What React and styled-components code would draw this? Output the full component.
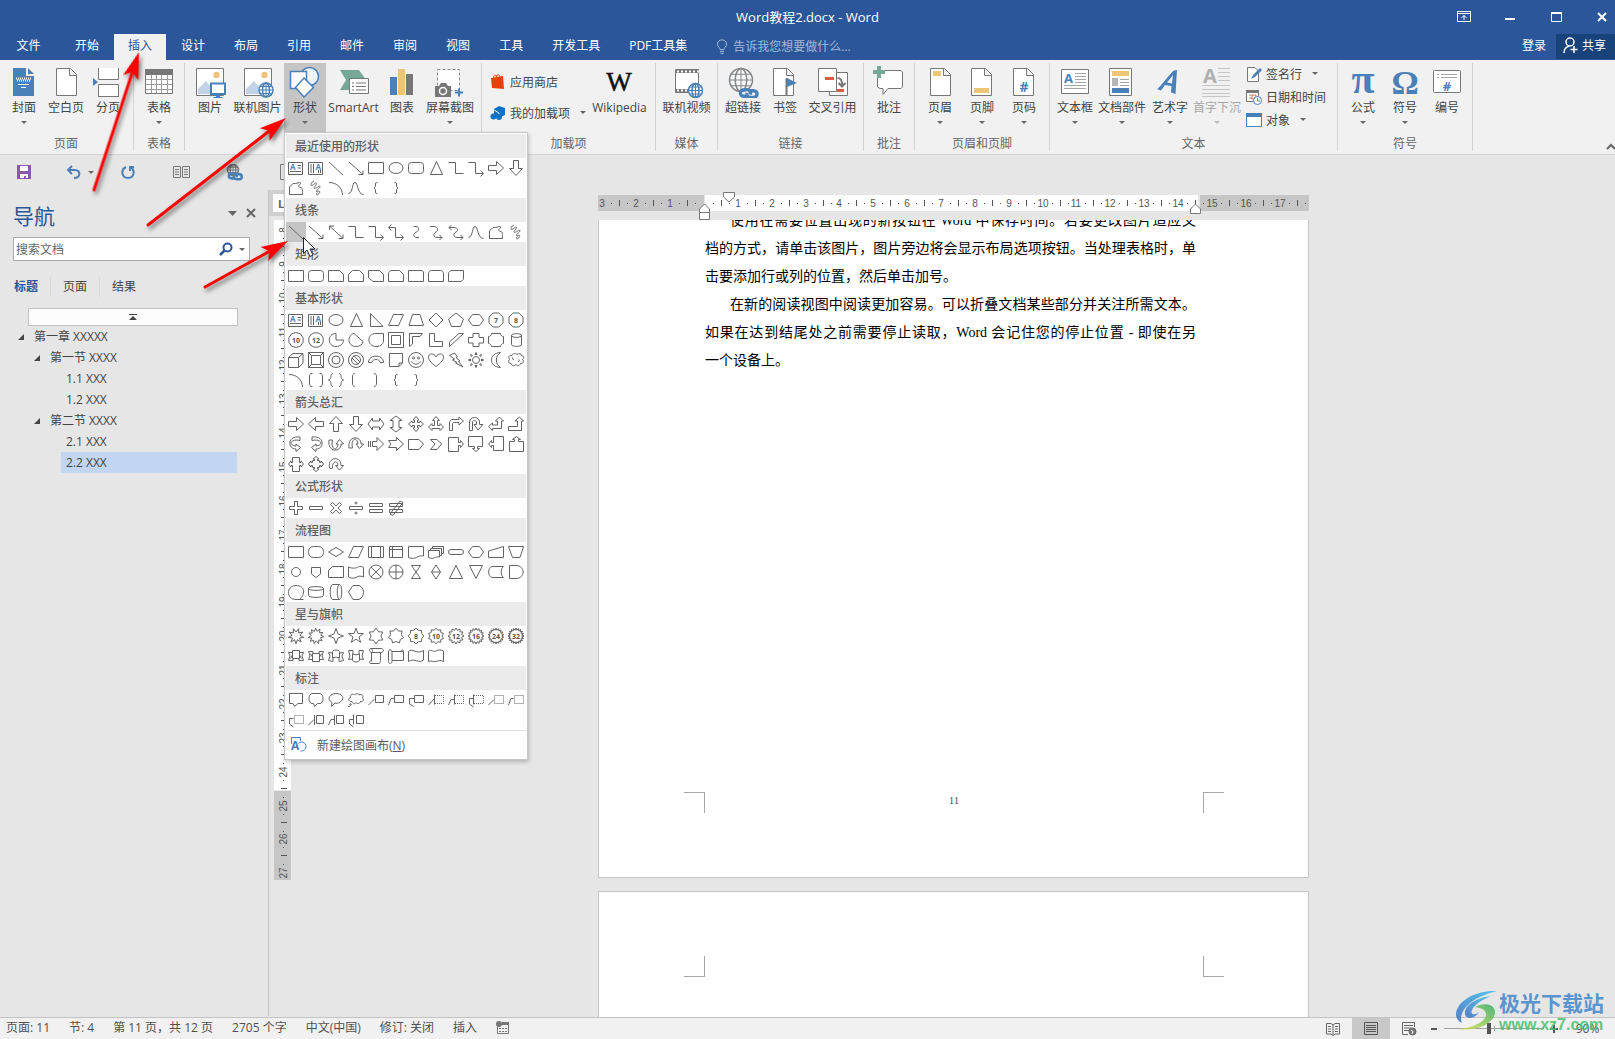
import React from "react";
import styled, { createGlobalStyle, css } from "styled-components";

const BLUE = "#2b579a";
const INK = "#444444";
const ICON_BLUE = "#4a80b8";
const ICON_GRAY = "#777777";
const GOLD = "#eec578";
const PALE = "#c3d3e8";
const TEAL = "#76a797";

const Global = createGlobalStyle`
  *, *::before, *::after { box-sizing: border-box; }
  body { margin: 0; background: #e6e6e6; }
  body, button, input { font-family: "Open Sans", "Noto Sans CJK SC", sans-serif; font-size: 12px; }
  button { border: 0; padding: 0; margin: 0; background: none; color: inherit; cursor: default; }
  svg { display: block; flex: none; }
`;

const App_ = styled.div`
  position: relative;
  height: 100vh;
  display: flex;
  flex-direction: column;
  overflow: hidden;
  color: ${INK};
  background: #e6e6e6;
`;

/* ---------- title bar and tabs ---------- */
const Header = styled.header`
  background: ${BLUE};
  color: #fff;
`;
const TitleBar = styled.div`
  height: 34px;
  display: grid;
  grid-template-columns: 1fr auto 1fr;
  align-items: center;
`;
const Title = styled.h1`
  margin: 0;
  grid-column: 2;
  font-size: 13px;
  font-weight: 400;
  line-height: 34px;
`;
const WindowButtons = styled.div`
  display: flex;
  justify-content: flex-end;
  gap: 16px;
`;
const WindowButton = styled.button`
  width: 30px;
  height: 32px;
  display: flex;
  justify-content: center;
  align-items: center;
  &:last-child { margin-right: -2px; }
`;
const TabRow = styled.nav`
  display: flex;
  height: 26px;
`;
const Tab = styled.button`
  height: 26px;
  line-height: 22px;
  padding: 0 14px 2px;
  margin: 0 1px 0 0;
  color: ${(p) => (p.$active ? BLUE : "#fff")};
  background: ${(p) => (p.$active ? "#f1f1f1" : "transparent")};
`;
const FileTab = styled(Tab)`
  width: 57px;
  margin-right: 4px;
`;
const TellMe = styled.label`
  display: flex;
  align-items: center;
  gap: 5px;
  height: 24px;
  margin-left: 14px;
  input {
    width: 150px;
    border: 0;
    padding: 0;
    outline: 0;
    background: transparent;
    color: #fff;
  }
  input::placeholder { color: #a2b9dc; opacity: 1; }
`;
const Account = styled.div`
  margin-left: auto;
  display: flex;
  gap: 10px;
`;
const SignIn = styled.button`
  line-height: 22px;
  height: 24px;
`;
const Share = styled.button`
  display: flex;
  align-items: center;
  gap: 4px;
  height: 25px;
  padding: 0 9px 3px 7px;
  background: #17427a;
`;

/* ---------- ribbon ---------- */
const RibbonBar = styled.section`
  position: relative;
  z-index: 5;
  display: flex;
  padding: 3px 0;
  background: #f1f1f1;
  border-bottom: 1px solid #d2d2d2;
`;
const Group = styled.div`
  display: flex;
  flex-direction: column;
  padding: 0 4px 0 ${(p) => (p.$first ? 3 : 4)}px;
  border-right: 1px solid #d4d4d4;
`;
const GroupBody = styled.div`
  display: flex;
  height: 72px;
`;
const GroupLabel = styled.div`
  text-align: center;
  height: 16px;
  line-height: 18px;
  color: #666;
`;
const BigWrap = styled.div`
  position: relative;
`;
const BigButton = styled.button`
  width: ${(p) => p.$w}px;
  height: 70px;
  padding-top: 3px;
  display: flex;
  flex-direction: column;
  align-items: center;
  white-space: nowrap;
  color: ${(p) => (p.disabled ? "#a6a6a6" : INK)};
  background: ${(p) => (p.$active ? "#c5c5c5" : "transparent")};
`;
const BigLabel = styled.span`
  margin-top: 1px;
  line-height: 18px;
`;
const CaretMark = styled.i`
  width: 0;
  height: 0;
  flex: none;
  border: 3px solid transparent;
  border-top-color: ${(p) => (p.$dim ? "#bdbdbd" : "#666")};
  border-bottom: 0;
`;
const BigCaret = styled(CaretMark)`
  margin-top: 4px;
`;
const SmallColumn = styled.div`
  width: ${(p) => p.$w}px;
  padding-top: ${(p) => p.$top || 0}px;
  display: flex;
  flex-direction: column;
`;
const SmallButton = styled.button`
  height: ${(p) => p.$h}px;
  padding: 0 0 2px 4px;
  display: flex;
  align-items: center;
  gap: 4px;
  white-space: nowrap;
  ${CaretMark} { margin-left: 6px; }
`;
const Collapse = styled.button`
  margin-left: auto;
  align-self: flex-end;
`;

/* ---------- shapes menu ---------- */
const Menu = styled.div`
  position: absolute;
  left: 0;
  top: 69px;
  width: 244px;
  padding: 1px;
  background: #fff;
  border: 1px solid #c6c6c6;
  box-shadow: 1px 2px 4px rgba(0, 0, 0, 0.22);
`;
const MenuHeading = styled.h2`
  margin: 0;
  padding-left: 9px;
  height: 24px;
  line-height: 26px;
  font-size: 12px;
  font-weight: 500;
  color: #606060;
  background: #ebebeb;
`;
const ShapeGrid = styled.div`
  display: grid;
  grid-template-columns: repeat(12, 20px);
  grid-auto-rows: 20px;
`;
const ShapeButton = styled.button`
  width: 20px;
  height: 20px;
  background: ${(p) => (p.$hot ? "#c5c5c5" : "transparent")};
`;
const MenuFooter = styled.button`
  width: 100%;
  height: 28px;
  display: flex;
  align-items: center;
  gap: 10px;
  padding-left: 4px;
  border-top: 1px solid #e1e1e1;
  color: #5a5a5a;
`;

/* ---------- quick access ---------- */
const QuickBar = styled.div`
  height: 35px;
  flex: none;
  display: flex;
  align-items: center;
  gap: 25px;
  padding: 0 0 1px 10px;
`;
const QuickButton = styled.button`
  width: 28px;
  height: 24px;
  display: flex;
  align-items: center;
  justify-content: center;
`;
const UndoButton = styled(QuickButton)`
  width: 26px;
  gap: 7px;
  padding-left: 3px;
  justify-content: flex-start;
`;

/* ---------- main ---------- */
const Main = styled.main`
  flex: 1;
  min-height: 0;
  display: flex;
`;
const NavPane = styled.aside`
  width: 269px;
  flex: none;
  padding-top: 12px;
  margin-bottom: 1px;
  border-right: 1px solid #c3c3c3;
`;
const NavHead = styled.div`
  display: flex;
  align-items: center;
  height: 28px;
  padding: 0 12px 0 13px;
  h2 {
    margin: 0 auto 0 0;
    font-size: 21px;
    line-height: 28px;
    font-weight: 400;
    color: ${BLUE};
  }
`;
const NavHeadButton = styled.button`
  height: 20px;
  margin-left: 9px;
  margin-bottom: 6px;
`;
const SearchBox = styled.label`
  display: flex;
  align-items: center;
  height: 24px;
  margin: 7px 18px 0 13px;
  padding: 0 4px 0 2px;
  background: #fff;
  border: 1px solid #ababab;
  gap: 6px;
  input {
    flex: 1;
    min-width: 0;
    border: 0;
    padding: 0;
    outline: 0;
    background: transparent;
  }
  input::placeholder { color: #666; opacity: 1; }
`;
const NavTabs = styled.div`
  display: flex;
  margin: 16px 0 0 13px;
`;
const NavTab = styled.button`
  line-height: 20px;
  padding: 0 12px;
  border-right: 1px solid #d9d9d9;
  color: ${(p) => (p.$active ? BLUE : INK)};
  font-weight: ${(p) => (p.$active ? 700 : 400)};
  &:first-child { padding-left: 1px; }
  &:last-child { border-right: 0; }
`;
const JumpTop = styled.button`
  display: flex;
  align-items: center;
  justify-content: center;
  width: 210px;
  height: 18px;
  margin: 11px 0 0 28px;
  background: #fdfdfd;
  border: 1px solid #c3c3c3;
`;
const Tree = styled.div`
  padding: 0 31px 0 13px;
  display: flex;
  flex-direction: column;
`;
const TreeRow = styled.button`
  display: flex;
  align-items: center;
  gap: 10px;
  height: 21px;
  line-height: 20px;
  margin-left: ${(p) => [0, 16, 48][p.$level]}px;
  padding-left: 5px;
  background: ${(p) => (p.$active ? "#c2d5f2" : "transparent")};
`;

const RulerColumn = styled.div`
  width: 23px;
  flex: none;
`;
const TabSelector = styled.button`
  display: block;
  width: 23px;
  height: 26px;
  padding: 4px 0 4px 4px;
  background: #d0d0d0;
  span {
    display: block;
    height: 18px;
    padding-left: 5px;
    line-height: 20px;
    text-align: left;
    background: #fdfdfd;
    font-weight: 700;
    font-size: 11px;
    color: #666;
  }
`;
const VRulerBox = styled.div`
  margin: 4px 0 0 5px;
`;
const DocArea = styled.div`
  flex: 1;
  min-width: 0;
  display: flex;
  flex-direction: column;
  align-items: center;
`;
const HRulerBox = styled.div`
  height: 30px;
  flex: none;
`;
const Pages = styled.div`
  flex: 1;
  min-height: 0;
  overflow: hidden;
  display: flex;
  flex-direction: column;
  gap: 13px;
`;
const Page = styled.article`
  width: 711px;
  height: ${(p) => p.$h}px;
  flex: none;
  display: flex;
  flex-direction: column;
  overflow: hidden;
  background: #fff;
  border: 1px solid #c6c6c6;
  border-top: ${(p) => (p.$cut ? "0" : "1px solid #c6c6c6")};
`;
const BodyText = styled.div`
  margin-top: -13px;
  padding: 0 112px 0 106px;
  font-family: "Liberation Serif", "Noto Sans CJK SC", serif;
  font-size: 14px;
  line-height: 28px;
  color: #000;
`;
const Line = styled.div`
  white-space: nowrap;
  padding-left: ${(p) => (p.$indent ? 25 : 0)}px;
  text-align: justify;
  text-align-last: ${(p) => (p.$end ? "left" : "justify")};
`;
const MarginRow = styled.div`
  display: flex;
  justify-content: space-between;
  height: 21px;
  padding: 0 84px 0 85px;
  margin: ${(p) => (p.$bottom ? "auto 0 64px" : "64px 0 0")};
  font-family: "Liberation Serif", serif;
  font-size: 11px;
  line-height: 17px;
  color: #555;
`;
const corner = css`
  width: 21px;
  height: 21px;
  border: 0 solid #a6a6a6;
`;
const Corner = styled.i`
  ${corner}
  border-width: ${(p) => p.$edges};
`;

/* ---------- status bar ---------- */
const Status = styled.footer`
  height: 22px;
  flex: none;
  display: flex;
  align-items: center;
  padding-left: 6px;
  background: #f1f1f1;
  border-top: 1px solid #c3c3c3;
  color: #505050;
`;
const StatusItem = styled.button`
  line-height: 18px;
  margin: 0 19px 2px 0;
  white-space: nowrap;
`;
const ViewButton = styled.button`
  width: 38px;
  height: 21px;
  display: flex;
  align-items: center;
  justify-content: center;
  background: ${(p) => (p.$active ? "#c8c8c8" : "transparent")};
  margin-left: ${(p) => (p.$push ? "auto" : "0")};
`;
const ZoomButton = styled.button`
  width: 12px;
  height: 18px;
  display: flex;
  align-items: center;
  justify-content: center;
`;
const Slider = styled.input`
  appearance: none;
  width: 100px;
  height: 14px;
  margin: 0 4px;
  background: linear-gradient(#a0a0a0, #a0a0a0) center / 100% 1px no-repeat,
    linear-gradient(#a0a0a0, #a0a0a0) center / 1px 5px no-repeat;
  &::-webkit-slider-thumb {
    appearance: none;
    width: 4px;
    height: 11px;
    background: #555;
  }
`;
const ZoomValue = styled.button`
  width: 55px;
  text-align: center;
  line-height: 18px;
`;

/* ---------- floating layers ---------- */
const Overlay = styled.svg`
  position: absolute;
  left: 0;
  top: 0;
  z-index: 10;
  pointer-events: none;
`;
const Watermark = styled.div`
  position: absolute;
  right: 11px;
  bottom: 6px;
  z-index: 9;
  display: flex;
  align-items: center;
  gap: 2px;
  opacity: 0.85;
  pointer-events: none;
`;
const WatermarkText = styled.div`
  display: flex;
  flex-direction: column;
  strong {
    font-size: 21px;
    line-height: 28px;
    color: #4287cb;
  }
  span {
    font-family: "Liberation Sans", sans-serif;
    font-weight: 700;
    font-size: 16px;
    line-height: 16px;
    color: #49c070;
  }
`;

/* ---------- shape gallery drawings, 20x20 grid ---------- */
const ring = (n, R, r, cx = 10, cy = 10, start = -90) => {
  const pts = [];
  const total = r ? n * 2 : n;
  for (let i = 0; i < total; i++) {
    const a = ((start + (i * 360) / total) * Math.PI) / 180;
    const rad = r && i % 2 ? r : R;
    pts.push(`${(cx + rad * Math.cos(a)).toFixed(1)} ${(cy + rad * Math.sin(a)).toFixed(1)}`);
  }
  return `M${pts.join("L")}Z`;
};
const P = (d, extra) => <path d={d} {...extra} />;
const Turn = (deg, el) => <g transform={`rotate(${deg} 10 10)`}>{el}</g>;
const Flip = (el) => <g transform="matrix(-1 0 0 1 20 0)">{el}</g>;
const Num = (t) => (
  <text x="10" y="12.5" textAnchor="middle" fontSize="7" fontWeight="700" fill="#555" stroke="none">{t}</text>
);
const badge = (d, t) => <>{P(d)}{Num(t)}</>;
const Dotted = (d) => P(d, { strokeDasharray: "1 1" });

const RIGHT = "M2.5 7.5H10.5V3.5L17.5 10L10.5 16.5V12.5H2.5Z";
const BRACE = "M11.5 4.500H10.500Q9.500 4.500 9.500 6V8.500L8 10L9.500 11.500V14Q9.500 15.500 10.500 15.500H11.500";
const CURVED = "M14 3C7 2 3 6 4 10C4 13 7 15 10 15V17.5L14.500 13.5L10 10V12C7 12 5 10 5 8.500C7 6 10 5.500 14 6.500Z";
const RIBBON = "M6.500 6.500H2.500L4 10L2.500 14.500H7V12.500M13.500 6.500H17.500L16 10L17.500 14.500H13V12.500M6.500 4.500H13.500V12.500H6.500Z";
const RIBBON_FOLD = "M6.500 9L4.500 12.500M13.500 9L15.500 12.500";
const UTURN = "M3.500 16.500V8C3.500 2 13.500 2 13.500 8V10.500H17L12 16L8 10.500H10.500V8C10.500 6 6.500 6 6.500 8V16.500Z";

const SHAPES = {
  tb: <>{P("M2.500 4.500H16.500V16.5H2.500ZM11.500 7.500H15M11.500 10H15M4 13.500H15")}<text x="4" y="12" fontSize="8" fontWeight="700" fill={ICON_BLUE} stroke="none">A</text></>,
  vtb: <>{P("M2.500 4.500H16.500V16.500H2.500ZM5 6V15M7.500 6V15M12.500 12V15M14.500 12V15")}<text x="9.500" y="11.500" fontSize="8" fontWeight="700" fill={ICON_BLUE} stroke="none">A</text></>,
  line: P("M3 4L17 17"),
  arrow: P("M3 4L17 16.500M17 12.500V16.500H12.500"),
  dbl: P("M3.500 4L17 16.500M17 12.500V16.500H12.500M3.500 8V4H8"),
  rect: P("M2.500 4.500H17.500V15.500H2.500Z"),
  ell: <ellipse cx="10" cy="10" rx="7" ry="5.500" />,
  round: <rect x="2.500" y="4.500" width="15" height="11" rx="3" />,
  tri: P("M10.500 3.500L16.500 16.500H4.500Z"),
  elbow: P("M2.500 4.500H9.500V15.500H17.500"),
  elbowA: P("M2.500 4.500H9.500V15.500H17.500M14.500 12.500L17.500 15.500L14.500 18.500"),
  elbowD: P("M2.500 5.500H9.500V15.500H17.500M14.500 12.500L17.500 15.500L14.500 18.500M5.500 2.500L2.500 5.500L5.500 8.500"),
  ra: P(RIGHT), la: Turn(180, P(RIGHT)), ua: Turn(-90, P(RIGHT)), da: Turn(90, P(RIGHT)),
  free: P("M3.500 16.500V9L7 5.500H9.500L13.500 4.500L15 5.500C12 7 12 9.500 15 9.500C16.500 10 16.500 11.500 16.500 16.500Z"),
  scrib: P("M8 3C5 4 4 8 6 7.500C8 7 10 3.500 10.500 5.500C10 8 7 9.500 8.500 10.500C11 10 14.500 6.500 14 9C13 11 9.500 12.500 10.500 13.500C13 13 15 13 13 15.500C11 18 9 16.500 11.500 14.500"),
  arc: P("M3 4.500C11 4.500 16.500 10 16.500 17"),
  curve: P("M2.500 15.500C7 15 6 4.500 9 4.500S11.500 16.500 17.500 16.500"),
  lbrace: P(BRACE), rbrace: Flip(P(BRACE)),
  cc: P("M7.500 4.500H10C14 5 13 9 10.500 10C7 11 6.500 15.500 11 15.500H13"),
  ccA: P("M4 4.500H8C13 5 12 9 10 10C7 11 7 15.500 11 15.500H16M13.500 13L16 15.500L13.500 18"),
  ccD: P("M3 5.500H8C13 6 12 9 10 10C7 11 7 15.500 11 15.500H17M14.500 13L17 15.500L14.500 18M5.500 3L3 5.500L5.500 8"),
  snip1: P("M2.500 4.500H13.500L17.500 8.500V15.500H2.500Z"),
  snip2: P("M6.500 4.500H13.500L17.500 8.500V15.500H2.500V8.500Z"),
  snipD: P("M2.500 4.500H13.500L17.500 8.500V15.500H7L2.500 11.500Z"),
  snipR: P("M6 4.500H13.500L17.500 8.500V15.500H2.500V8C2.500 6 4 4.500 6 4.500Z"),
  rnd1: P("M2.500 4.500H15C16.500 4.500 17.500 5.500 17.500 7V15.500H2.500Z"),
  rnd2: P("M5.500 4.500H14.500C16.500 4.500 17.500 6 17.500 8V15.500H2.500V8C2.500 6 3.500 4.500 5.500 4.500Z"),
  rndD: P("M6 4.500H17.500V12C17.500 14 16 15.500 14 15.500H2.500V8C2.500 6 4 4.500 6 4.500Z"),
  rtri: P("M4.500 3.500V16.500H17Z"),
  para: P("M7.500 4.500H17.500L12.500 15.500H2.500Z"),
  trap: P("M6.500 4.500H14L17.500 15.500H3Z"),
  dia: P("M10 3L17 10L10 17L3 10Z"),
  pent: P("M10 3L17.500 9L14.500 16.500H5.500L2.500 9Z"),
  hex: P("M6.500 4.500H13.500L17.500 10L13.500 15.500H6.500L2.500 10Z"),
  hept: badge(ring(8, 7.600, 0, 10, 10, 22.500), "7"), oct: badge(ring(8, 7.600, 0, 10, 10, 22.500), "8"),
  deca: badge(ring(10, 7.500), "10"), dodec: badge(ring(12, 7.500, 0, 10, 10, 15), "12"),
  pie: P("M10 3.500C1 3.500 1 16.500 10 16.500C14 16.500 17.500 14 17.500 10H10Z"),
  chord: P("M8 3.500C1 5 1 16.500 10 16.500C14 16.500 16.500 14.500 17 11.500Z"),
  tear: P("M17.500 3.500H10C0 3.500 1 16.500 10 16.500C16 16.500 17.500 13 17.500 10Z"),
  frame: P("M2.500 2.500H17.500V17.500H2.500ZM5.500 5.500H14.500V14.500H5.500Z"),
  half: P("M3.500 3.500H16.500L14 6.500H6.500V14L3.500 16.500Z"),
  corner: P("M3.500 3.500H8.500V11.500H16.500V16.500H3.500Z"),
  stripe: P("M13 3.500H17.500L3.500 16.500V12Z"),
  cross: P("M7 3.500H13V7.500H17.500V13H13V16.500H7V13H2.500V7.500H7Z"),
  plaque: P("M5.500 3.500H14.500C14.500 5.500 16 6.500 17.500 6.500V13.500C16 13.500 14.500 15 14.500 16.500H5.500C5.500 15 4 13.500 2.500 13.500V6.500C4 6.500 5.500 5.500 5.500 3.500Z"),
  can: P("M5.500 5.500C5.500 3 15.500 3 15.500 5.500V14.500C15.500 17 5.500 17 5.500 14.500ZM5.500 5.500C5.500 8 15.500 8 15.500 5.500"),
  cube: P("M2.500 7.500H12.500V17.500H2.500ZM2.500 7.500L7 3.500H17V13L12.500 17.500M12.500 7.500L17 3.500"),
  bevel: P("M2.500 2.500H17.500V17.500H2.500ZM5.500 5.500H14.500V14.500H5.500ZM2.500 2.500L5.500 5.500M17.500 2.500L14.500 5.500M2.500 17.500L5.500 14.500M17.500 17.500L14.500 14.500"),
  donut: <><circle cx="10" cy="10" r="7.500" /><circle cx="10" cy="10" r="4" /></>,
  no: <><circle cx="10" cy="10" r="7.500" /><circle cx="10" cy="10" r="4.500" />{P("M6 8L12 14M8 6L14 12")}</>,
  barc: P("M2.500 12.500C2.500 4 17.500 4 17.500 12.500H14C14 8.500 6 8.500 6 12.500Z"),
  fold: P("M3.500 3.500H16.500V13L13 16.500H3.500ZM16.500 13H13V16.500"),
  smile: <><circle cx="10" cy="10" r="7.500" /><circle cx="7.500" cy="8" r="1" /><circle cx="12.500" cy="8" r="1" />{P("M5.500 11.500C7 15 13 15 14.500 11.500")}</>,
  heart: P("M10 16.500C4 12 2.500 9.500 2.500 7C2.500 3.500 8 2.500 10 7C12 2.500 17.500 3.500 17.500 7C17.500 9.500 16 12 10 16.500Z"),
  bolt: P("M8.500 3L11.500 7L10 7.500L14 11L12.500 11.500L17 17L9.500 13L11 12.500L6.500 10L8.500 9L3.500 5.500Z"),
  sun: <><circle cx="10" cy="10" r="3.500" />{P("M10 2.500L11 4.500H9ZM10 17.500L9 15.500H11ZM2.500 10L4.500 9V11ZM17.500 10L15.500 11V9ZM4.500 4.500L6.500 5.500L5.500 6.500ZM15.500 4.500L14.500 6.500L13.500 5.500ZM4.500 15.500L5.500 13.500L6.500 14.500ZM15.500 15.500L13.500 14.500L14.500 13.500Z")}</>,
  moon: P("M14.500 2.500C2.500 3 2.500 17 14.500 17.500C9 14 9 6 14.500 2.500Z"),
  cloud: P("M5 13.500C2 13.500 2 10 4 9.500C1.500 8 3 4.500 6 5.500C7 3 10 3 11 4.500C13 3 15.500 3.500 15.500 5.500C18.500 6 18 9 16.500 9.500C18.500 12 16.500 14 14.500 13.500C13.500 16.500 10.500 16 10 14.500C8.500 16.500 5.500 16 5 13.500ZM8 9.500C6.500 9.500 6 8.500 6.500 7.500M12 11.500C13.500 11.500 13.500 10 13 9.500"),
  bks: P("M6.500 3.500C4 3.500 3.500 4.500 3.500 7V13C3.500 15.500 4 16.500 6.500 16.500M13.500 3.500C16 3.500 16.500 4.500 16.500 7V13C16.500 15.500 16 16.500 13.500 16.500"),
  brs: P("M7 3.500C3.500 3.500 6.500 9 2.500 10C6.500 11 3.500 16.500 7 16.500M13 3.500C16.500 3.500 13.500 9 17.500 10C13.500 11 16.500 16.500 13 16.500"),
  lbk: P("M9 3.500C6.500 4 6.500 5 6.500 7V13C6.500 15 6.500 16 9 16.500"),
  rbk: P("M8 3.500C10.500 4 10.500 5 10.500 7V13C10.500 15 10.500 16 8 16.500"),
  lra: P("M2 10L6.500 4V7H13.500V4L18 10L13.500 16V13H6.500V16Z"),
  uda: Turn(90, P("M2 10L6.500 4V7H13.500V4L18 10L13.500 16V13H6.500V16Z")),
  quad: P("M10 2.500L13 6H11.500V8.500H14V7L17.500 10L14 13V11.500H11.500V14H13L10 17.500L7 14H8.500V11.500H6V13L2.500 10L6 7V8.500H8.500V6H7Z"),
  tri3: P("M10 2.500L13.500 6.500H11.500V11.500H14V9.500L17.500 13L14 16.500V14.500H6V16.500L2.500 13L6 9.500V11.500H8.500V6.500H6.500Z"),
  bend: P("M3.500 16.500V9C3.500 6.500 5 5.500 7 5.500H13V3L17.500 7L13 11V8.500H8C7 8.500 6.500 9 6.500 10V16.500Z"),
  uturn: P(UTURN),
  lup: P("M2.500 12.500L6.500 9V11H11.500V7H9.500L13.500 3L17.500 7H15.500V14.500H6.500V16.500Z"),
  bup: P("M2.500 12.500H11.500V7H9L13.500 3L17.500 7H15.500V16.500H2.500Z"),
  cvR: P(CURVED), cvL: Flip(P(CURVED)), cvU: Turn(-90, P(CURVED)), cvD: <g transform="matrix(0 1 1 0 0 0)">{P(CURVED)}</g>,
  strp: P("M2.500 7V13M4.500 7V13M6.500 7.500H11V3.500L17.500 10L11 16.500V12.500H6.500Z"),
  ntch: P("M2.500 6.500H10.500V3.500L17.500 10L10.500 16.500V13.500H2.500L5 10Z"),
  pArr: P("M2.500 5.500H13L17.500 10L13 15.500H2.500Z"),
  chev: P("M4.500 5.500H11L15.500 10L11 15.500H4.500L9 10Z"),
  coR: P("M2.500 3.500H12.500V8.500H14.500V6.500L17.500 10L14.500 13.500V11.500H12.500V17.500H2.500Z"),
  coD: P("M2.500 2.500H16.500V12.500H11.500V14.500H13.500L10 17.500L6.500 14.500H8.500V12.500H2.500Z"),
  coL: Turn(180, P("M2.500 3.500H12.500V8.500H14.500V6.500L17.500 10L14.500 13.500V11.500H12.500V17.500H2.500Z")),
  coU: P("M3.500 17.500H17.500V7.500H12.500V5.500H14.500L10.500 2.500L6.500 5.500H8.500V7.500H3.500Z"),
  coLR: P("M2.500 10L5 7V8.500H6.500V3.500H13.500V8.500H15V7L17.500 10L15 13V11.500H13.500V17.500H6.500V11.500H5V13Z"),
  coQ: P("M10 2.500L13 5H11.500V6.500H13.500V8.500H15V7L17.500 10L15 13V11.500H13.500V13.500H11.500V15H13L10 17.500L7 15H8.500V13.500H6.500V11.500H5V13L2.500 10L5 7V8.500H6.500V6.500H8.500V5H7Z"),
  circ: P("M3.500 14C1 2.500 15.500 1.500 15 11.500H17.500L13.500 16L9.500 11.500H12C12 6 6 6.500 6.500 14Q5 15.500 3.500 14Z"),
  plus: P("M8.500 3.500H11.500V8.500H16.500V11.500H11.500V16.500H8.500V11.500H3.500V8.500H8.500Z"),
  minus: P("M3.500 8.500H16.500V11.500H3.500Z"),
  mult: P("M4.500 6.500L6.500 4.500L10 8L13.500 4.500L15.500 6.500L12 10L15.500 13.500L13.500 15.500L10 12L6.500 15.500L4.500 13.500L8 10Z"),
  div: <>{P("M3.500 8.500H16.500V11.500H3.500Z")}<circle cx="10" cy="5" r="1" /><circle cx="10" cy="15" r="1" /></>,
  eq: P("M3.500 5.500H16.500V8.500H3.500ZM3.500 11.500H16.500V14.500H3.500Z"),
  neq: P("M3.500 5.500H16.500V8.500H3.500ZM3.500 11.500H16.500V14.500H3.500ZM14 3L17 4.500L7 17.500L4 16Z"),
  fRound: <rect x="2.500" y="4.500" width="15" height="11" rx="5" />,
  fDia: P("M10 5.500L17.500 10L10 14.500L2.500 10Z"),
  pre: P("M2.500 4.500H17.500V15.500H2.500ZM5.500 4.500V15.500M14.500 4.500V15.500"),
  inn: P("M3.500 4.500H16.500V15.500H3.500ZM6.500 4.500V15.500M3.500 7.500H16.500"),
  doc: P("M2.500 4.500H17.500V14C12 12.500 10 18.500 2.500 15.500Z"),
  mdoc: P("M2.500 8.500H13.500V15C9 14 8 18 2.500 15.500ZM4.500 8.500V6.500H15.500V13.500H13.500M6.500 6.500V4.500H17.500V11.500H15.500"),
  term: <rect x="2.500" y="7.500" width="15" height="5" rx="2.500" />,
  man: P("M2.500 9L17.500 4.500V15.500H2.500Z"),
  mop: P("M2.500 4.500H17.500L14 15.500H6.500Z"),
  conn: <circle cx="10" cy="10" r="4.500" />,
  off: P("M5.500 5.500H14.500V12L10 15.500L5.500 12Z"),
  card: P("M6.500 4.500H17.500V15.500H2.500V8.500Z"),
  tape: P("M2.500 5C7 7 11 6 12 5C14 4 16 4.500 17.500 5.500V15C14 13.500 12 14 10 15.500C7 17 4 16 2.500 15Z"),
  sumj: <><circle cx="10" cy="10" r="7" />{P("M5 5L15 15M15 5L5 15")}</>,
  orj: <><circle cx="10" cy="10" r="7" />{P("M10 3V17M3 10H17")}</>,
  coll: P("M5.500 3.500H14.500L5.500 16.500H14.500Z"),
  sort: P("M10 3L14.500 10L10 17L5.500 10ZM5.500 10H14.500"),
  ext: P("M10 3.500L16.500 16.500H3.500Z"), mrg: P("M3.500 3.500H16.500L10 16.500Z"),
  stor: P("M6 4.500H17.500C14.500 6 14.500 14 17.500 15.500H6C1.500 14 1.500 6 6 4.500Z"),
  delay: P("M3.500 3.500H10C19.500 3.500 19.500 16.500 10 16.500H3.500Z"),
  seq: P("M10 17.500C0 17.500 0 3.500 10 3.500S19 13 13.500 17.500ZM10 17.500H17.500"),
  disk: P("M2.500 6.500C2.500 4 17.500 4 17.500 6.500V13.500C17.500 16 2.500 16 2.500 13.500ZM2.500 6.500C2.500 9 17.500 9 17.500 6.500"),
  dir: P("M6.500 2.500C3.500 2.500 3.500 17.500 6.500 17.500H13.500C16.500 17.500 16.500 2.500 13.500 2.500ZM13.500 2.500C10.500 2.500 10.500 17.500 13.500 17.500"),
  disp: P("M7 3.500H13C19 5.500 19 15 13 17.500H7L2.500 10Z"),
  ex1: P(ring(9, 7.800, 4, 10, 10, -70)), ex2: P(ring(11, 7.800, 4.800, 10, 10, -60)),
  s4: P(ring(4, 7.500, 2.800)), s5: P(ring(5, 7.800, 3.200)), s6: P(ring(6, 7.800, 5)), s7: P(ring(7, 7.800, 5.500)),
  s8: badge(ring(8, 7.800, 6.200), "8"), s10: badge(ring(10, 7.800, 6), "10"), s12: badge(ring(12, 8, 5.800), "12"),
  s16: badge(ring(16, 8, 5.800), "16"), s24: badge(ring(18, 8, 5.800), "24"), s32: badge(ring(20, 8, 5.800), "32"),
  rbU: <>{P(RIBBON)}{P(RIBBON_FOLD)}</>,
  rbD: <g transform="matrix(1 0 0 -1 0 20)">{P(RIBBON)}{P(RIBBON_FOLD)}</g>,
  crU: P("M6.500 5.500C8 3.500 12 3.500 13.500 5.500V12C12 11 8 11 6.500 12ZM6.500 7L2.500 6.500L4 10L2.500 14.500L7 15.500V12M13.500 7L17.500 6.500L16 10L17.500 14.500L13 15.500V12"),
  crD: P("M6.500 14.500C8 16.500 12 16.500 13.500 14.500V8C12 9 8 9 6.500 8ZM6.500 13L2.500 13.500L4 10L2.500 4.500L7 4.500V8M13.500 13L17.500 13.500L16 10L17.500 4.500L13 4.500V8"),
  vsc: P("M5.500 6.500V15C3 14.500 2.500 17.500 5 17.500H13C14.500 17.500 14.500 16 14.500 6.500M4.500 2.500H15.500C18 3 18 6 15.500 6.500H5.500C7 6 7 3 4.500 2.500C3 3 3 6 5.500 6.500"),
  hsc: P("M6 5.500H17.500V14.500H6M2.500 6C2.500 3 6 3 6 6V15.500C6 18 2.500 18 2.500 15.500ZM17.500 5.500C17.500 3.500 15 3.500 15 5.500"),
  wave: P("M2.500 5.500C6 1.500 11 9 17.500 4.500V14C13 18 8 11.500 2.500 15.500Z"),
  dwave: P("M2.500 5C5 3 8 6.500 10 5S15 3.500 17.500 5V15.500C15 14 12 14.500 10 15.500S5 14 2.500 15.500Z"),
  cRect: P("M3.500 3.500H16.500V13.500H12L8.500 16.500L7 13.500H3.500Z"),
  cRnd: P("M6 3.500H14C18 4 18 13 14 13.500H11.500L8.500 16.500L7.500 13.500H6C2 13 2 4 6 3.500Z"),
  cOv: P("M6 12.500C0 9 4 3.500 10 3.500S19 8 15 11.500C13 13.500 10 13.500 9 13L5.500 16.500Z"),
  cCl: <>{P("M6 11.500C2 12 2 8 4.500 7.500C4 4 7.500 3.500 8.500 5C10 3 13 3.500 13 5C16 3.500 18 6 16.500 8C18.500 10 16.500 12.500 14.500 11.500C13.500 14.500 10.500 13.500 10 12.500C9 14.500 6.500 14 6 11.500Z")}<circle cx="4.500" cy="14.500" r="0.800" /><circle cx="3" cy="16.500" r="0.500" /></>,
  l1: P("M9.500 5.500H17.500V12.500H9.500ZM2.500 15L8.500 9"),
  l2: P("M8.500 5.500H17.500V12.500H8.500ZM2.500 15L5 8.500H8.500"),
  l3: P("M8.500 5.500H17.500V12.500H8.500ZM8.500 8.500H3.500V14L7.500 16.500"),
  a1: <>{P("M2.500 15L8 9M8.500 4.500V14.500")}{Dotted("M9 5.500H17.500V13.500H9")}</>,
  a2: <>{P("M2.500 15L5 9.500H8M8.500 4.500V14.500")}{Dotted("M9 5.500H17.500V13.500H9")}</>,
  a3: <>{P("M7.500 8.500H3.500V14L7.500 17M7.500 4.500V14.500")}{Dotted("M8 5.500H17.500V13.500H8")}</>,
  n1: <>{P("M2.500 15L8 9.500")}{Dotted("M8.500 5.500H17.500V13.500H8.500Z")}</>,
  n2: <>{P("M2.500 15L5 8.500H7.500")}{Dotted("M8.500 5.500H17.500V13.500H8.500Z")}</>,
  n3: <>{P("M7.500 8.500H3.500V14L7.500 17")}{Dotted("M8.500 5.500H17.500V13.500H8.500Z")}</>,
  b1: P("M10.500 5.500H17.500V13.500H10.500ZM8.500 5V15M2.500 15L8 9.500"),
  b2: P("M10.500 5.500H17.500V13.500H10.500ZM8.500 5V15M2.500 15L5 9.500H8"),
  b3: P("M10.500 5.500H17.500V13.500H10.500ZM7.500 4.500V14.500M7.500 9.500H3.500V14L7.500 17"),
};

const MENU = [
  ["最近使用的形状", "tb vtb line arrow rect ell round tri elbow elbowA ra da free scrib arc curve lbrace rbrace"],
  ["线条", "line arrow dbl elbow elbowA elbowD cc ccA ccD curve free scrib"],
  ["矩形", "rect round snip1 snip2 snipD snipR rnd1 rnd2 rndD"],
  ["基本形状", "tb vtb ell tri rtri para trap dia pent hex hept oct deca dodec pie chord tear frame half corner stripe cross plaque can cube bevel donut no barc fold smile heart bolt sun moon cloud arc bks brs lbk rbk lbrace rbrace"],
  ["箭头总汇", "ra la ua da lra uda quad tri3 bend uturn lup bup cvR cvL cvU cvD strp ntch pArr chev coR coD coL coU coLR coQ circ"],
  ["公式形状", "plus minus mult div eq neq"],
  ["流程图", "rect fRound fDia para pre inn doc mdoc term hex man mop conn off card tape sumj orj coll sort ext mrg stor delay seq disk dir disp"],
  ["星与旗帜", "ex1 ex2 s4 s5 s6 s7 s8 s10 s12 s16 s24 s32 rbU rbD crU crD vsc hsc wave dwave"],
  ["标注", "cRect cRnd cOv cCl l1 l2 l3 a1 a2 a3 n1 n2 n3 b1 b2 b3"],
];

const ShapeIcon = ({ id }) => (
  <svg width="20" height="20" viewBox="0 0 20 20" fill="none" stroke="#636363" strokeWidth="1">{SHAPES[id]}</svg>
);

/* ---------- ribbon drawings, 32x32 grid ---------- */
const page = "M6.500 2.500H20.500L26.500 8.500V29.500H6.500ZM19.500 2.500V9.500H26.500";
const outline = { fill: "#fff", stroke: ICON_GRAY };
const globe = (cx, cy, r, c) => (
  <g fill="#f6f9fc" stroke={c} strokeWidth="1.500">
    <circle cx={cx} cy={cy} r={r} />
    <ellipse cx={cx} cy={cy} rx={r / 2} ry={r} fill="none" />
    <path fill="none" d={`M${cx - r} ${cy}H${cx + r}M${cx} ${cy - r}V${cy + r}M${cx - r * 0.85} ${cy - r / 2}H${cx + r * 0.85}M${cx - r * 0.85} ${cy + r / 2}H${cx + r * 0.85}`} strokeWidth="1" />
  </g>
);
const chain = (x, y, s = 1) => (
  <g transform={`translate(${x} ${y}) scale(${s})`} fill="none" stroke={ICON_BLUE} strokeWidth="3">
    <path d="M9 7.500H5.500C1 7.500 1 1.500 5.500 1.500H8C11 1.500 12 4 11 6" />
    <path d="M9.500 2.500H14C18.500 2.500 18.500 8.500 14 8.500H11.500C8.500 8.500 7.500 6.500 8.500 4.500" />
  </g>
);
const photo = (
  <>
    <path d="M2.500 2.500H29.500V29.500H2.500Z" {...outline} />
    <circle cx="22.500" cy="9" r="3.200" fill={GOLD} />
    <path d="M4 28V23L12 15L20 24V28Z" fill={PALE} />
  </>
);
const BIG = {
  cover: <><path d="M5 2H18V10H26V30H5Z" fill={ICON_BLUE} /><path d="M20 2L26 8H20Z" fill={ICON_BLUE} /><path d="M8 12.500H23M9 14.500H23" stroke="#fff" strokeDasharray="1 1" strokeWidth="2" /><path d="M10 18.500H21M13 21.500H18" stroke="#fff" /></>,
  blank: <path d={page} {...outline} />,
  brk: <><path d="M6.500 2V13.500H26.500V2M6.500 30.500V18.500H26.500V30.500" {...outline} /><path d="M6 30.500H27" stroke={ICON_GRAY} /><path d="M1 12L6 16L1 20Z" fill={ICON_BLUE} /></>,
  table: <><path d="M2.500 3.500H29.500V27.500H2.500Z" {...outline} /><path d="M2 3H30V9H2Z" fill={ICON_GRAY} /><path d="M3 13.500H29M3 18.500H29M3 23.500H29M8.500 9V27M13.500 9V27M18.500 9V27M24.500 9V27" stroke="#9b9b9b" /></>,
  pic: <>{photo}<path d="M17 17.500H31V28H17Z" fill="#fff" stroke={ICON_BLUE} strokeWidth="2" /><path d="M22 29H26V31H28.500V32H19.500V31H22Z" fill={ICON_BLUE} /></>,
  opic: <>{photo}{globe(24, 24, 7, ICON_BLUE)}</>,
  shapes: <><circle cx="20.500" cy="10.500" r="9" fill="#eef4fa" stroke={ICON_BLUE} strokeWidth="1.500" /><path d="M1.500 5.500H17.500V22.500H1.500Z" fill="#fff" stroke={ICON_BLUE} strokeWidth="1.500" /><path d="M15 12L24.500 21.500L15 31L6.500 21.500Z" fill="#fff" stroke={ICON_BLUE} strokeWidth="1.500" /></>,
  smart: <><path d="M2 4H21L28 14V24H2L8 14Z" fill={TEAL} /><path d="M11.500 12.500H30.500V27.500H11.500Z" {...outline} /><path d="M14 17H16M14 20.500H16M14 24H16M18 17H28M18 20.500H28M18 24H28" stroke={ICON_GRAY} /></>,
  chart: <><path d="M4 11H11V29H4Z" fill={ICON_BLUE} /><path d="M12 3H19V29H12Z" fill={GOLD} /><path d="M20 8H27V29H20Z" fill={ICON_GRAY} /></>,
  shot: <><path d="M3.500 3.500H25.500V24.500H3.500Z" fill="#fff" stroke="#888" strokeDasharray="3 2" /><path d="M1 20H5L7 17H12L14 20H17V31H1Z" fill={ICON_GRAY} /><circle cx="9" cy="25" r="3.500" fill="none" stroke="#fff" strokeWidth="1.500" /><path d="M21 26.500H29M25 22.500V30.500" stroke={ICON_BLUE} strokeWidth="2" /></>,
  wiki: <text x="15" y="25" textAnchor="middle" fontFamily="Liberation Serif, serif" fontSize="27" fill="#111" stroke="#111" strokeWidth="0.500">W</text>,
  video: <><path d="M4.500 3.500H27.500V26.500H4.500Z" {...outline} /><path d="M4 5.500H28M4 24.500H18" stroke={ICON_GRAY} strokeWidth="3" /><path d="M6 5.500H28M6 24.500H18" stroke="#fff" strokeWidth="2" strokeDasharray="2 2" />{globe(24.500, 24.500, 7, ICON_BLUE)}</>,
  link: <>{globe(14, 14, 11.500, "#858585")}{chain(11, 22, 1.100)}</>,
  mark: <><path d={page} {...outline} transform="translate(-2 0)" /><path d="M17.500 12V29" stroke={ICON_GRAY} strokeWidth="2" /><path d="M18 12L28 17L18 21Z" fill={ICON_BLUE} /></>,
  xref: <><path d="M12.500 6.500H30.500V29.500H12.500Z" {...outline} /><path d="M1.500 2.500H19.500V25.500H1.500Z" {...outline} /><path d="M8 11H17V14H8ZM20 23H27V26H20Z" fill="#d4603f" /><path d="M20.500 12C24 12 25 14 25 19M21.500 17L25 20.500L28.500 17" fill="none" stroke={ICON_GRAY} strokeWidth="2" /></>,
  note: <><path d="M5.500 4.500H28L29.500 6V21L28 22.500H15L10 28.500V22.500H7L4.500 21V10Z" {...outline} /><path d="M0 4H4V0H8V4H12V8H8V12H4V8H0Z" fill={TEAL} /></>,
  head: <><path d={page} {...outline} /><path d="M9 5H17V10H9Z" fill={GOLD} /></>,
  foot: <><path d={page} {...outline} transform="translate(-1 0)" /><path d="M8 22H23V27H8Z" fill={GOLD} /></>,
  num: <><path d={page} {...outline} transform="translate(-1 0)" /><text x="16" y="26" textAnchor="middle" fontSize="14" fontWeight="700" fill={ICON_BLUE}>#</text></>,
  tbox: <><path d="M2.500 3.500H29.500V27.500H2.500Z" {...outline} /><text x="5" y="17" fontSize="13" fontWeight="700" fill={ICON_BLUE}>A</text><path d="M16 7.500H27M16 10.500H27M16 13.500H27M16 16.500H27M5 19.500H27M5 22.500H27" stroke="#a5a5a5" /></>,
  parts: <><path d="M3.500 2.500H25.500V29.500H3.500Z" {...outline} /><path d="M6 5H23V10H6Z" fill={GOLD} /><path d="M6 12H12V20H6Z" fill="#b5b5b5" /><path d="M14 13.500H23M14 16.500H23M14 19.500H23" stroke="#a5a5a5" /><path d="M6 22H23V27H6Z" fill={ICON_BLUE} /></>,
  wart: <path d="M3 23C6 22 17 6 20 4.500L23 4L21.500 28L17 26.500L17.500 20L11 19L7 24.500ZM13 16.500L18 17.500L19 9Z" fill={ICON_BLUE} fillRule="evenodd" />,
  drop: <><text x="2" y="17" fontSize="20" fontWeight="700" fill="#b0b0b0">A</text><path d="M17 2.500H29M17 6.500H29M17 10.500H29M17 14.500H29M1 19.500H29M1 23.500H29M1 27.500H29M1 30.500H29" stroke="#c6c6c6" /></>,
  pi: <text x="16" y="27" textAnchor="middle" fontFamily="Liberation Serif, serif" fontWeight="700" fontSize="42" fill={ICON_BLUE}>π</text>,
  omega: <text x="16" y="28" textAnchor="middle" fontFamily="Liberation Serif, serif" fontWeight="700" fontSize="34" fill={ICON_BLUE}>Ω</text>,
  numb: <><rect x="2.500" y="4.500" width="27" height="22" rx="1" {...outline} /><path d="M6 8.500H8M10 8.500H26M6 11.500H8M10 11.500H26" stroke="#a5a5a5" /><text x="16" y="25" textAnchor="middle" fontSize="13" fontWeight="700" fill={ICON_BLUE}>#</text></>,
};
const SMALL = {
  store: <><path d="M1 4L13 2L14 15L2 14Z" fill="#e8400c" /><path d="M3.500 4C3.500 1 6.500 0 7 3M6 4C6 0 10 0 10 3" fill="none" stroke="#e8400c" /></>,
  addin: <><path d="M9 1L15 3V10L9 13L4 9V4Z" fill="#1172c4" /><path d="M9 13V8L4 5" stroke="#f1f1f1" strokeWidth="1" fill="none" /><circle cx="3.500" cy="11.500" r="3" fill="#1172c4" /><circle cx="9" cy="12" r="3" fill="#1172c4" /></>,
  sign: <><path d="M1.500 1.500H9L12.500 5V15.500H1.500Z" {...outline} /><path d="M5 13L7 9L14 2L16 4L9 11Z" fill={ICON_BLUE} /></>,
  date: <><path d="M0.500 1.500H12.500V12.500H0.500Z" {...outline} /><path d="M0 1H13V4H0Z" fill={ICON_GRAY} /><path d="M3 6H6M3 9H6" stroke="#999" /><path d="M6 6H10V10H6Z" fill="none" stroke="#d9713c" /><circle cx="11.500" cy="11.500" r="4" fill="#fff" stroke={ICON_BLUE} /><path d="M11.500 9V12H14" fill="none" stroke={ICON_BLUE} /></>,
  obj: <><path d="M0.500 1.500H15.500V14.500H0.500Z" fill="#fff" stroke={ICON_BLUE} /><path d="M0 1H16V5H0Z" fill={ICON_BLUE} /></>,
};

const RIBBON_GROUPS = [
  ["页面", [["cover", "封面", 42, 1], ["blank", "空白页", 42], ["brk", "分页", 42]]],
  ["表格", [["table", "表格", 42, 1]]],
  ["", [["pic", "图片", 42], ["opic", "联机图片", 53], ["shapes", "形状", 42, 1], ["smart", "SmartArt", 55], ["chart", "图表", 42], ["shot", "屏幕截图", 54, 1]]],
  ["加载项", [{ w: 102, top: 4, h: 31, items: [["store", "应用商店"], ["addin", "我的加载项", 1]] }, ["wiki", "Wikipedia", 63]]],
  ["媒体", [["video", "联机视频", 53]]],
  ["链接", [["link", "超链接", 42], ["mark", "书签", 42], ["xref", "交叉引用", 53]]],
  ["批注", [["note", "批注", 42]]],
  ["页眉和页脚", [["head", "页眉", 42, 1], ["foot", "页脚", 42, 1], ["num", "页码", 42, 1]]],
  ["文本", [["tbox", "文本框", 42, 1], ["parts", "文档部件", 52, 1], ["wart", "艺术字", 44, 1], ["drop", "首字下沉", 50, 1, 1], { w: 91, top: 0, h: 23, items: [["sign", "签名行", 1], ["date", "日期和时间"], ["obj", "对象", 1]] }]],
  ["符号", [["pi", "公式", 42, 1], ["omega", "符号", 42, 1], ["numb", "编号", 42]]],
];

function ShapesMenu() {
  return (
    <Menu role="menu">
      {MENU.map(([title, ids]) => (
        <section key={title}>
          <MenuHeading>{title}</MenuHeading>
          <ShapeGrid>
            {ids.split(" ").map((id, i) => (
              <ShapeButton key={id + i} aria-label={id} $hot={title === "线条" && i === 0}>
                <ShapeIcon id={id} />
              </ShapeButton>
            ))}
          </ShapeGrid>
        </section>
      ))}
      <MenuFooter>
        <svg width="17" height="17" fill="none" stroke={ICON_BLUE}>
          <path d="M1.500 8V1.500H10.500V5" />
          <circle cx="11.500" cy="10.500" r="4.500" />
          <text x="1" y="14" fontSize="12" fontWeight="700" fill={ICON_BLUE} stroke="#fff" strokeWidth="2" paintOrder="stroke">A</text>
        </svg>
        <span>新建绘图画布(<u>N</u>)</span>
      </MenuFooter>
    </Menu>
  );
}

function Big({ item }) {
  const [icon, label, w, caret, off] = item;
  const open = icon === "shapes";
  return (
    <BigWrap>
      <BigButton $w={w} $active={open} disabled={!!off}>
        <svg width="32" height="32" viewBox="0 0 32 32" fill="none">{BIG[icon]}</svg>
        <BigLabel>{label}</BigLabel>
        {caret ? <BigCaret $dim={off} /> : null}
      </BigButton>
      {open && <ShapesMenu />}
    </BigWrap>
  );
}

function Ribbon() {
  return (
    <RibbonBar>
      {RIBBON_GROUPS.map(([label, items], g) => (
        <Group key={label + g} $first={g === 0}>
          <GroupBody>
            {items.map((it, i) =>
              Array.isArray(it) ? (
                <Big key={i} item={it} />
              ) : (
                <SmallColumn key={i} $w={it.w} $top={it.top}>
                  {it.items.map(([icon, text, caret]) => (
                    <SmallButton key={icon} $h={it.h}>
                      <svg width="16" height="16" fill="none">{SMALL[icon]}</svg>
                      <span>{text}</span>
                      {caret ? <CaretMark /> : null}
                    </SmallButton>
                  ))}
                </SmallColumn>
              )
            )}
          </GroupBody>
          <GroupLabel>{label}</GroupLabel>
        </Group>
      ))}
      <Collapse aria-label="折叠功能区">
        <svg width="9" height="8" fill="none" stroke="#666" strokeWidth="2"><path d="M1 6L5 2L9 6" /></svg>
      </Collapse>
    </RibbonBar>
  );
}

/* one scale division per centimetre */
const cm = (n) => Math.round((n * 711) / 21);

function HRuler() {
  const zero = 106;
  const marks = [];
  for (let n = -3; n <= 17; n++) {
    const x = zero + cm(n);
    if (n !== 0) marks.push(<text key={n} x={x} y="17" textAnchor="middle" fontSize="10" fontFamily="Liberation Sans, sans-serif" fill="#555">{Math.abs(n)}</text>);
    marks.push(<path key={"t" + n} d={`M${x + 9} 13.500h1M${x + 17.5} 10v6M${x + 25} 13.500h1`} stroke="#555" />);
  }
  return (
    <HRulerBox>
      <svg width="711" height="30" fill="none">
        <path d="M0 5H106V21H0ZM602 5H711V21H602Z" fill="#c6c6c6" />
        <path d="M107 5H600V21H107Z" fill="#fff" />
        {marks}
        <path d="M125.500 2.500H136.500V7L131 12L125.500 7ZM101.500 22.500V19L106.500 14L111.500 19V22.500ZM101.500 22.500H111.500V29.500H101.500ZM592.500 23.500V19L597.500 14L602.500 19V23.500Z" fill="#fff" stroke="#777" />
      </svg>
    </HRulerBox>
  );
}

function VRuler() {
  const marks = [];
  for (let n = 8; n <= 27; n++) {
    const y = 10 + cm(n - 8);
    marks.push(
      <g key={n} transform={`translate(9 ${y}) rotate(-90)`}>
        <text x="0" y="4" textAnchor="middle" fontSize="10" fontFamily="Liberation Sans, sans-serif" fill="#555">{n}</text>
      </g>
    );
    if (n < 27) marks.push(<path key={"t" + n} d={`M9.500 ${y + 8}v1M7 ${y + 16.5}h6M9.500 ${y + 25}v1`} stroke="#555" />);
  }
  return (
    <VRulerBox>
      <svg width="17" height="660" fill="none">
        <path d="M0 0H17V570H0Z" fill="#fff" />
        <path d="M0 571H17V660H0Z" fill="#c6c6c6" />
        {marks}
      </svg>
    </VRulerBox>
  );
}

const TREE = [
  [0, "第一章 XXXXX"], [1, "第一节 XXXX"], [2, "1.1 XXX"], [2, "1.2 XXX"],
  [1, "第二节 XXXX"], [2, "2.1 XXX"], [2, "2.2 XXX"],
];

function Navigation() {
  return (
    <NavPane>
      <NavHead>
        <h2>导航</h2>
        <NavHeadButton aria-label="选项"><svg width="9" height="20"><path d="M0 8H9L4.500 13Z" fill="#666" /></svg></NavHeadButton>
        <NavHeadButton aria-label="关闭"><svg width="10" height="20" stroke="#666" strokeWidth="2"><path d="M1 6L9 14M9 6L1 14" /></svg></NavHeadButton>
      </NavHead>
      <SearchBox>
        <input placeholder="搜索文档" aria-label="搜索文档" />
        <svg width="14" height="14" fill="none" stroke={BLUE} strokeWidth="2"><circle cx="8.500" cy="5.500" r="4" /><path d="M5.500 8.500L1 13" strokeWidth="2.500" /></svg>
        <CaretMark />
      </SearchBox>
      <NavTabs>
        <NavTab $active>标题</NavTab>
        <NavTab>页面</NavTab>
        <NavTab>结果</NavTab>
      </NavTabs>
      <JumpTop aria-label="跳转到开头">
        <svg width="8" height="7"><path d="M0 0H8V1H0ZM4 2L8 6H0Z" fill="#444" /></svg>
      </JumpTop>
      <Tree>
        {TREE.map(([level, text], i) => (
          <TreeRow key={text} $level={level} $active={i === TREE.length - 1}>
            {level < 2 && <svg width="6" height="6"><path d="M6 0V6H0Z" fill="#444" /></svg>}
            <span>{text}</span>
          </TreeRow>
        ))}
      </Tree>
    </NavPane>
  );
}

const TABS = ["开始", "插入", "设计", "布局", "引用", "邮件", "审阅", "视图", "工具", "开发工具", "PDF工具集"];

function RedArrow({ from, to }) {
  const dx = to[0] - from[0];
  const dy = to[1] - from[1];
  const len = Math.hypot(dx, dy);
  const deg = (Math.atan2(dy, dx) * 180) / Math.PI;
  return (
    <g transform={`translate(${from[0]} ${from[1]}) rotate(${deg})`}>
      <path d={`M0 0H${len - 20}`} stroke="#f00" strokeWidth="3" strokeLinecap="round" />
      <path d={`M${len} 0L${len - 27} 8L${len - 21} 0L${len - 27} -8Z`} fill="#f00" />
    </g>
  );
}

export default function App() {
  return (
    <App_>
      <Global />
      <Header>
        <TitleBar>
          <Title>Word教程2.docx - Word</Title>
          <WindowButtons>
            <WindowButton aria-label="功能区显示选项"><svg width="14" height="12" fill="none" stroke="#fff"><path d="M0.500 0.500H13.500V10.500H0.500ZM0.500 2.500H13.500M7 9V4.500M4.500 7L7 4.500L9.500 7" /></svg></WindowButton>
            <WindowButton aria-label="最小化"><svg width="10" height="12"><path d="M0 7H10V9H0Z" fill="#fff" /></svg></WindowButton>
            <WindowButton aria-label="最大化"><svg width="11" height="12" fill="none" stroke="#fff"><path d="M0.500 1.500H10.500V10.500H0.500Z" /><path d="M0 2H11" strokeWidth="2" /></svg></WindowButton>
            <WindowButton aria-label="关闭"><svg width="10" height="10" stroke="#fff" strokeWidth="2"><path d="M1 1L9 9M9 1L1 9" /></svg></WindowButton>
          </WindowButtons>
        </TitleBar>
        <TabRow>
          <FileTab>文件</FileTab>
          {TABS.map((t) => <Tab key={t} $active={t === "插入"}>{t}</Tab>)}
          <TellMe>
            <svg width="12" height="15" fill="none" stroke="#a2b9dc"><path d="M4 10.500C4 8.500 1.500 8 1.500 5C1.500 -0.500 10.500 -0.500 10.500 5C10.500 8 8 8.500 8 10.500ZM4 12.500H8M4.500 14.500H7.500" /></svg>
            <input placeholder="告诉我您想要做什么..." aria-label="告诉我您想要做什么" />
          </TellMe>
          <Account>
            <SignIn>登录</SignIn>
            <Share>
              <svg width="15" height="17" fill="none" stroke="#fff" strokeWidth="1.500"><circle cx="7" cy="5" r="4" /><path d="M1 16C1 12 3 10 6 9M7.500 12.500H14.500M11 9V16" /></svg>
              共享
            </Share>
          </Account>
        </TabRow>
      </Header>

      <Ribbon />

      <QuickBar>
        <QuickButton aria-label="保存"><svg width="14" height="14"><path d="M0 0H14V14H0Z" fill="#8a57ad" /><path d="M3 1H11V6H3ZM3 9H11V13H9V11H7V13H3Z" fill="#fff" /></svg></QuickButton>
        <UndoButton aria-label="撤消">
          <svg width="15" height="14" fill="none" stroke={ICON_BLUE} strokeWidth="2"><path d="M6 1L2 5L6 9M2 5H9C15 5 15 13 8 13" /></svg>
          <CaretMark />
        </UndoButton>
        <QuickButton aria-label="重复"><svg width="14" height="14" fill="none" stroke={ICON_BLUE} strokeWidth="2"><path d="M5 2C-1 5 1 13 7 13S15 5 9 2M9 6V2H13" /></svg></QuickButton>
        <QuickButton aria-label="双页"><svg width="17" height="12" fill="none" stroke="#777"><path d="M0.500 0.500H7.500V11.500H0.500ZM9.500 0.500H16.500V11.500H9.500ZM2 3.500H6M2 6H6M2 8.500H6M11 3.500H15M11 6H15M11 8.500H15" /></svg></QuickButton>
        <QuickButton aria-label="超链接"><svg width="17" height="17" fill="none">{globe(7, 6, 5.500, "#777")}{chain(1, 8, 0.850)}</svg></QuickButton>
        <QuickButton aria-label="预览"><svg width="14" height="16" fill="none" stroke="#777"><path d="M0.500 0.500H13.500V15.500H0.500Z" /></svg></QuickButton>
      </QuickBar>

      <Main>
        <Navigation />
        <RulerColumn>
          <TabSelector aria-label="制表符"><span>L</span></TabSelector>
          <VRuler />
        </RulerColumn>
        <DocArea>
          <HRuler />
          <Pages>
            <Page $h={658} $cut>
              <BodyText>
                <Line $indent>使用在需要位置出现的新按钮在 Word 中保存时间。若要更改图片适应文</Line>
                <Line>档的方式，请单击该图片，图片旁边将会显示布局选项按钮。当处理表格时，单</Line>
                <Line $end>击要添加行或列的位置，然后单击加号。</Line>
                <Line $indent>在新的阅读视图中阅读更加容易。可以折叠文档某些部分并关注所需文本。</Line>
                <Line>如果在达到结尾处之前需要停止读取，Word 会记住您的停止位置 - 即使在另</Line>
                <Line $end>一个设备上。</Line>
              </BodyText>
              <MarginRow $bottom>
                <Corner $edges="1px 1px 0 0" />
                <span>11</span>
                <Corner $edges="1px 0 0 1px" />
              </MarginRow>
            </Page>
            <Page $h={658}>
              <MarginRow>
                <Corner $edges="0 1px 1px 0" />
                <Corner $edges="0 0 1px 1px" />
              </MarginRow>
            </Page>
          </Pages>
        </DocArea>
      </Main>

      <Status>
        <StatusItem>页面: 11</StatusItem>
        <StatusItem>节: 4</StatusItem>
        <StatusItem>第 11 页，共 12 页</StatusItem>
        <StatusItem>2705 个字</StatusItem>
        <StatusItem>中文(中国)</StatusItem>
        <StatusItem>修订: 关闭</StatusItem>
        <StatusItem>插入</StatusItem>
        <StatusItem aria-label="宏">
          <svg width="13" height="13" fill="none"><path d="M1.500 3.500H12.500V12.500H1.500Z" stroke="#777" /><path d="M6 1H13V4H6Z" fill="#777" /><circle cx="3" cy="3" r="3" fill="#777" /><path d="M3 7.500H11M3 10.500H11" stroke="#777" strokeDasharray="2 1" /></svg>
        </StatusItem>
        <ViewButton aria-label="阅读视图" $push><svg width="14" height="14" fill="none" stroke="#666"><path d="M0.500 1.500H5L7 3L9 1.500H13.500V12H9L7 13.500L5 12H0.500ZM7 3V13M2 4.500H5M2 7H5M2 9.500H5M9 4.500H12M9 7H12M9 9.500H12" /></svg></ViewButton>
        <ViewButton aria-label="页面视图" $active><svg width="14" height="13" fill="none" stroke="#555"><path d="M0.500 0.500H13.500V12.500H0.500ZM2 3.500H12M2 5.500H12M2 7.500H12M2 9.500H12" /></svg></ViewButton>
        <ViewButton aria-label="Web 版式"><svg width="15" height="14" fill="none" stroke="#666"><path d="M6 12.500H0.500V0.500H12.500V5M2 3.500H11M2 6H9M2 8.500H7" /><circle cx="10.500" cy="9.500" r="3.500" fill="#777" /><path d="M9 8L11 9.500L10 12" stroke="#fff" /></svg></ViewButton>
        <ZoomButton aria-label="缩小"><svg width="6" height="2"><path d="M0 0H6V2H0Z" fill="#555" /></svg></ZoomButton>
        <Slider type="range" min="10" max="190" defaultValue="90" aria-label="缩放" />
        <ZoomButton aria-label="放大"><svg width="8" height="8"><path d="M3 0H5V3H8V5H5V8H3V5H0V3H3Z" fill="#555" /></svg></ZoomButton>
        <ZoomValue>90%</ZoomValue>
      </Status>

      <Watermark>
        <svg width="42" height="42" viewBox="0 0 42 42">
          <defs>
            <linearGradient id="swirlBlue" x1="0" y1="1" x2="1" y2="0"><stop offset="0" stopColor="#3e6fc0" /><stop offset="1" stopColor="#3cc0ee" /></linearGradient>
            <linearGradient id="swirlGreen" x1="0" y1="1" x2="1" y2="0"><stop offset="0" stopColor="#e2e04a" /><stop offset="1" stopColor="#35b06a" /></linearGradient>
          </defs>
          <path d="M42 1C22 0 2 10 1 24C1 28 3 31 7 33C3 24 12 8 42 1Z" fill="url(#swirlBlue)" />
          <path d="M36 6C20 8 9 16 10 24C11 30 20 29 24 22C19 26 15 24 17 20C20 14 27 10 36 6Z" fill="url(#swirlBlue)" />
          <path d="M20 17C28 12 40 14 40 22C40 32 24 42 3 39C18 38 30 32 31 25C31 20 27 18 20 17Z" fill="url(#swirlGreen)" />
        </svg>
        <WatermarkText>
          <strong>极光下载站</strong>
          <span>www.xz7.com</span>
        </WatermarkText>
      </Watermark>

      <Overlay width="340" height="310" fill="none">
        <g filter="drop-shadow(2px 3px 2px rgba(0,0,0,0.5))">
          <RedArrow from={[94, 190]} to={[139, 52]} />
          <RedArrow from={[148, 225]} to={[286, 118]} />
          <RedArrow from={[205, 287]} to={[288, 241]} />
        </g>
        <path d="M303.500 237.500V253.500L307 250L310 256.500L313 255L310 249H315Z" fill="#fff" stroke="#223" />
      </Overlay>
    </App_>
  );
}
